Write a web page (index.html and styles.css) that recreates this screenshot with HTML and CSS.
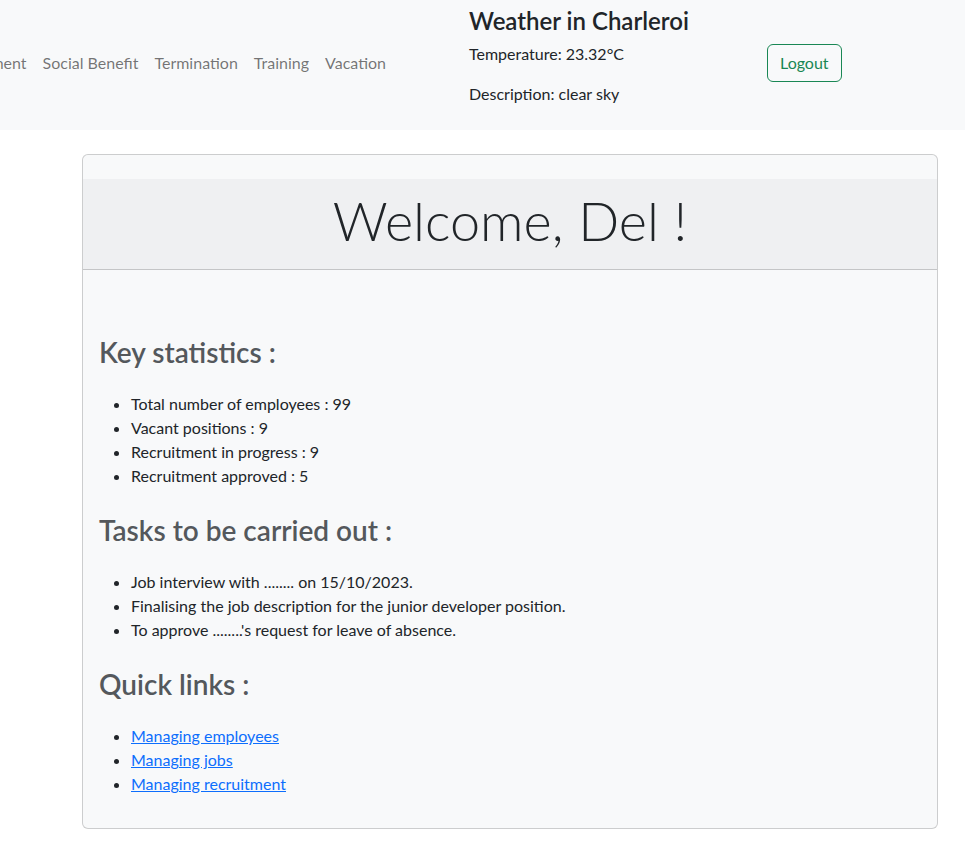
FILE: index.html
```html
<!DOCTYPE html>
<html lang="en">
<head>
<meta charset="utf-8">
<title>Dashboard</title>
<link rel="stylesheet" href="styles.css">
</head>
<body>
<header class="navbar">
  <nav class="nav-wrap">
    <ul class="nav-list">
      <li><a class="nav-link" href="#">Department</a></li>
      <li><a class="nav-link" href="#">Social Benefit</a></li>
      <li><a class="nav-link" href="#">Termination</a></li>
      <li><a class="nav-link" href="#">Training</a></li>
      <li><a class="nav-link" href="#">Vacation</a></li>
    </ul>
  </nav>
  <div class="weather">
    <h4 class="weather-title">Weather in Charleroi</h4>
    <p class="weather-line">Temperature: 23.32°C</p>
    <p class="weather-line">Description: clear sky</p>
  </div>
  <button class="btn-logout" type="button">Logout</button>
</header>

<main class="card">
  <div class="card-header">
    <h1 class="display">Welcome, Del !</h1>
  </div>
  <div class="card-body">
    <h2 class="section-title first">Key statistics :</h2>
    <ul class="list">
      <li>Total number of employees : 99</li>
      <li>Vacant positions : 9</li>
      <li>Recruitment in progress : 9</li>
      <li>Recruitment approved : 5</li>
    </ul>
    <h2 class="section-title">Tasks to be carried out :</h2>
    <ul class="list">
      <li>Job interview with ........ on 15/10/2023.</li>
      <li>Finalising the job description for the junior developer position.</li>
      <li>To approve ........'s request for leave of absence.</li>
    </ul>
    <h2 class="section-title">Quick links :</h2>
    <ul class="list">
      <li><a href="#">Managing employees</a></li>
      <li><a href="#">Managing jobs</a></li>
      <li><a href="#">Managing recruitment</a></li>
    </ul>
  </div>
</main>
</body>
</html>
```
FILE: styles.css
```css
* { box-sizing: border-box; }

body {
  margin: 0;
  background: #ffffff;
  color: #212529;
  font-family: Lato, "Noto Sans", sans-serif;
  font-size: 16px;
  line-height: 24px;
}

.navbar {
  display: flex;
  align-items: center;
  height: 130px;
  padding: 8px 0;
  background: #f8f9fa;
}

.nav-wrap {
  width: 394px;
  flex-shrink: 0;
  overflow: hidden;
  margin-bottom: 4px;
}

.nav-list {
  display: flex;
  justify-content: flex-end;
  list-style: none;
  margin: 0;
  padding: 0;
}

.nav-list li { flex-shrink: 0; }

.nav-link {
  display: block;
  padding: 8px;
  color: rgba(0, 0, 0, 0.55);
  text-decoration: none;
  white-space: nowrap;
}

.weather {
  margin-left: 75px;
  width: 298px;
}

.weather-title {
  margin: 0 0 8px;
  font-size: 24px;
  line-height: 26px;
  font-weight: 600;
}

.weather-line {
  margin: 0 0 16px;
}

.btn-logout {
  margin-bottom: 4px;
  height: 38px;
  padding: 6px 12px;
  border: 1px solid #198754;
  border-radius: 6px;
  background: transparent;
  color: #198754;
  font-family: inherit;
  font-size: 16px;
  line-height: 24px;
}

.card {
  display: block;
  margin: 24px 0 0 82px;
  width: 856px;
  padding-top: 24px;
  border: 1px solid rgba(0, 0, 0, 0.175);
  border-radius: 6px;
  background: #f8f9fa;
}

.card-header {
  height: 91px;
  padding: 8px 16px;
  background: #eff0f2;
  border-bottom: 1px solid rgba(0, 0, 0, 0.175);
  text-align: center;
}

.display {
  margin: 0;
  font-size: 54px;
  line-height: 67px;
  font-weight: 300;
  color: #212529;
}

.card-body {
  padding: 16px;
}

.section-title {
  margin: 26px 0 24px;
  font-size: 28px;
  line-height: 32px;
  font-weight: 600;
  color: #54585c;
}

.section-title.first { margin-top: 50px; }

.list {
  margin: 0 0 16px;
  padding-left: 32px;
}

.list a {
  color: #0d6efd;
  text-decoration: underline;
}
```
